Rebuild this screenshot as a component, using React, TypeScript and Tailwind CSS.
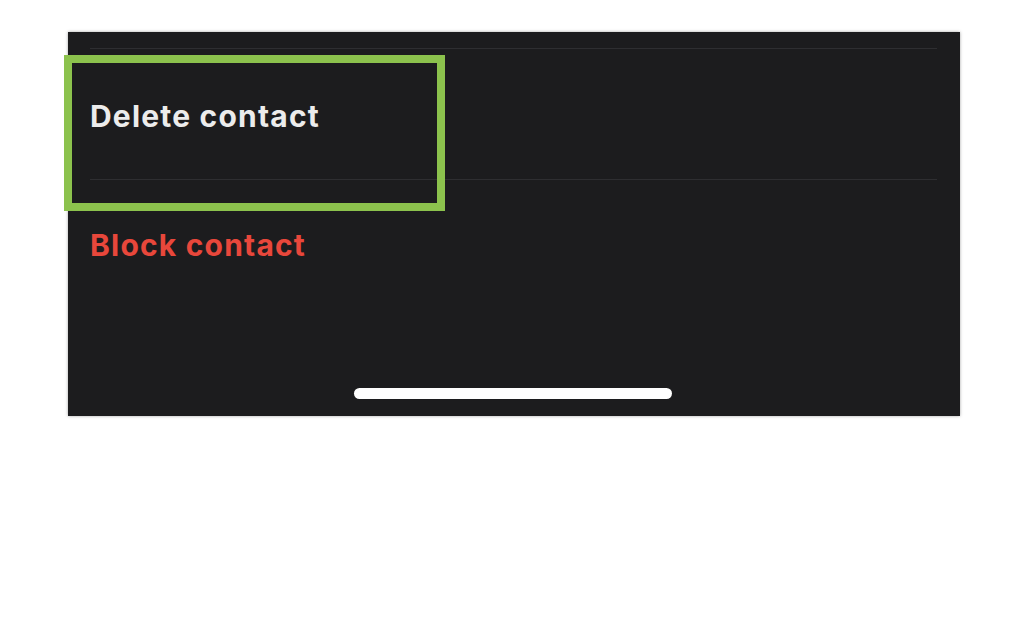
export default function App() {
  return (
    <div className="w-[1024px] h-[640px] bg-white pt-8 pl-[68px]" style={{ fontFamily: 'Inter, "Liberation Sans", sans-serif' }}>
      <div className="relative w-[892px] h-[384px] bg-[#1c1c1e] shadow-[0_0_3px_rgba(0,0,0,0.35)] flex flex-col">
        {/* Menu rows */}
        <div className="pt-4 pl-[22px] pr-[23px]">
          <div className="border-t border-[#2e2e31]" />
          <div className="h-[131px] pt-[50px] border-b border-[#2e2e31]">
            <span className="text-[30px] leading-[34px] font-bold tracking-[1.2px] text-[#ececec]">Delete contact</span>
          </div>
          <div className="pt-[48px]">
            <span className="text-[30px] leading-[34px] font-bold tracking-[1.2px] text-[#e8473b]">Block contact</span>
          </div>
        </div>

        {/* Home indicator */}
        <div className="mt-auto mb-[17px] flex justify-center pr-[3px]">
          <div className="w-[318px] h-[11px] rounded-full bg-white" />
        </div>

        {/* Highlight annotation */}
        <div className="absolute left-[-4px] top-[23px] w-[381px] h-[156px] border-[8px] border-[#8cc24d]" />
      </div>
    </div>
  );
}
